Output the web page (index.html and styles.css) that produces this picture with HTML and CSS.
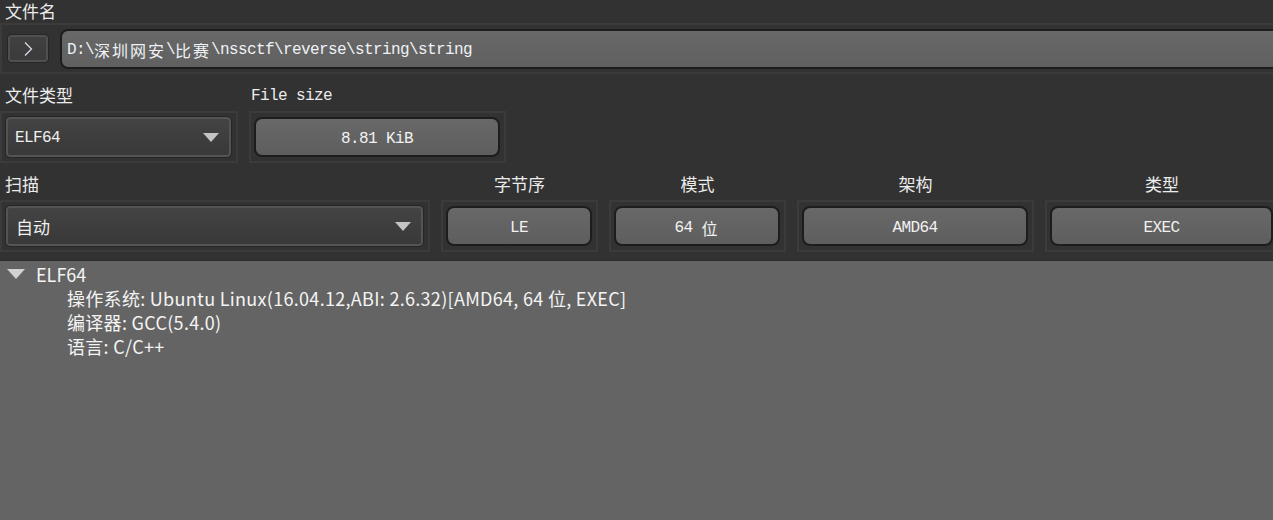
FILE: index.html
```html
<!DOCTYPE html>
<html lang="zh-CN">
<head>
<meta charset="utf-8">
<title>文件信息</title>
<link rel="stylesheet" href="styles.css">
</head>
<body>
<div class="page">
  <div class="label label-top">文件名</div>
  <div class="frame frame-file">
    <div class="btn">
      <svg width="10" height="16" viewBox="0 0 10 16"><polyline points="2,1.5 8.5,8 2,14.5" fill="none" stroke="#d6dde6" stroke-width="1.3"/></svg>
    </div>
    <div class="path mono">D:\<span class="cj">深圳网安</span>\<span class="cj">比赛</span>\nssctf\reverse\string\string</div>
  </div>

  <div class="row row-b">
    <div class="col">
      <div class="label">文件类型</div>
      <div class="frame">
        <div class="combo"><span class="mono combo-text">ELF64</span><span class="arrow"></span></div>
      </div>
    </div>
    <div class="col">
      <div class="label label-mono mono">File size</div>
      <div class="frame">
        <div class="display mono">8.81 KiB</div>
      </div>
    </div>
  </div>

  <div class="row row-c">
    <div class="col">
      <div class="label">扫描</div>
      <div class="frame">
        <div class="combo"><span class="combo-cjk">自动</span><span class="arrow"></span></div>
      </div>
    </div>
    <div class="col">
      <div class="label center">字节序</div>
      <div class="frame"><div class="display mono">LE</div></div>
    </div>
    <div class="col">
      <div class="label center">模式</div>
      <div class="frame"><div class="display mono"><span>64&nbsp;</span><span class="cj">位</span></div></div>
    </div>
    <div class="col">
      <div class="label center">架构</div>
      <div class="frame"><div class="display mono">AMD64</div></div>
    </div>
    <div class="col">
      <div class="label center">类型</div>
      <div class="frame"><div class="display mono">EXEC</div></div>
    </div>
  </div>

  <div class="tree">
    <div class="tree-row"><span class="tree-arrow"></span><span>ELF64</span></div>
    <div class="tree-child">操作系统: Ubuntu Linux(16.04.12,ABI: 2.6.32)[AMD64, 64 位, EXEC]</div>
    <div class="tree-child">编译器: GCC(5.4.0)</div>
    <div class="tree-child">语言: C/C++</div>
  </div>
</div>
</body>
</html>
```

FILE: styles.css
```css
html, body {
  margin: 0;
  padding: 0;
  background: #323232;
  overflow: hidden;
  height: 520px;
}

.page {
  width: 1290px;
  height: 520px;
  display: flex;
  flex-direction: column;
  color: #ececec;
  font-family: "Noto Sans CJK SC", "Noto Sans", sans-serif;
}

.mono {
  font-family: "Liberation Mono", "DejaVu Sans Mono", monospace;
  font-size: 16px;
  letter-spacing: -0.6px;
}

.cj {
  font-family: "Noto Sans CJK SC", sans-serif;
  font-size: 16px;
  letter-spacing: 2px;
}

.label {
  height: 27px;
  line-height: 21px;
  font-size: 17px;
  padding-left: 5px;
  white-space: nowrap;
}

.label-top {
  height: 23px;
}

.label-mono {
  padding-left: 2px;
  padding-top: 1px;
  height: 26px;
  font-size: 16px;
  line-height: 22px;
}

.label.center {
  text-align: center;
  padding-left: 0;
}

.frame {
  box-sizing: border-box;
  border: 2px solid #3b3b3b;
  height: 52px;
  padding: 0 4px 0 3px;
  display: flex;
  align-items: center;
}

.frame-file {
  height: 51px;
  gap: 11px;
  padding-left: 5px;
}

.btn {
  box-sizing: border-box;
  width: 42px;
  height: 29px;
  border: 1px solid #262626;
  border-radius: 4px;
  background: linear-gradient(#414141, #3a3a3a);
  box-shadow: inset 0 0 0 2px #505050;
  display: flex;
  align-items: center;
  justify-content: center;
  flex: none;
}

.path {
  box-sizing: border-box;
  flex: 1;
  height: 40px;
  border: 2px solid #1d1d1d;
  border-radius: 8px;
  background: linear-gradient(#686868, #606060);
  padding: 3px 0 0 5px;
  display: flex;
  align-items: center;
  color: #eef2f6;
  white-space: nowrap;
}

.row {
  display: grid;
  column-gap: 11px;
}

.row-b {
  margin-top: 10px;
  grid-template-columns: 238px 257px;
}

.row-c {
  margin-top: 10px;
  grid-template-columns: 430px 157px 177px 237px 234px;
}

.combo {
  box-sizing: border-box;
  flex: 1;
  height: 42px;
  border: 1px solid #262626;
  border-radius: 5px;
  background: linear-gradient(#444444, #383838);
  box-shadow: inset 0 0 0 2px #545454;
  display: flex;
  align-items: center;
  justify-content: space-between;
  padding: 0 12px 0 9px;
  color: #f0f0f0;
}

.combo-text {
  padding-top: 1px;
}

.combo-cjk {
  font-size: 17px;
  padding-left: 1px;
}

.arrow {
  width: 0;
  height: 0;
  border-left: 8px solid transparent;
  border-right: 8px solid transparent;
  border-top: 9px solid #c4c4c4;
}

.display {
  box-sizing: border-box;
  flex: 1;
  height: 40px;
  border: 2px solid #1d1d1d;
  border-radius: 8px;
  background: linear-gradient(#686868, #5e5e5e);
  padding-top: 3px;
  display: flex;
  align-items: center;
  justify-content: center;
  color: #f2f2f2;
  white-space: nowrap;
}

.tree {
  margin-top: 8px;
  flex: 1;
  background: #646464;
  border-top: 1px solid #2a2a2a;
  padding-top: 1px;
  font-size: 18px;
  line-height: 24px;
  color: #f4f4f4;
}

.tree-row {
  display: flex;
  align-items: center;
  gap: 11px;
  padding-left: 7px;
}

.tree-arrow {
  width: 0;
  height: 0;
  border-left: 9px solid transparent;
  border-right: 9px solid transparent;
  border-top: 10px solid #d2d2d2;
}

.tree-child {
  padding-left: 67px;
  white-space: nowrap;
  letter-spacing: 0.3px;
}
```
